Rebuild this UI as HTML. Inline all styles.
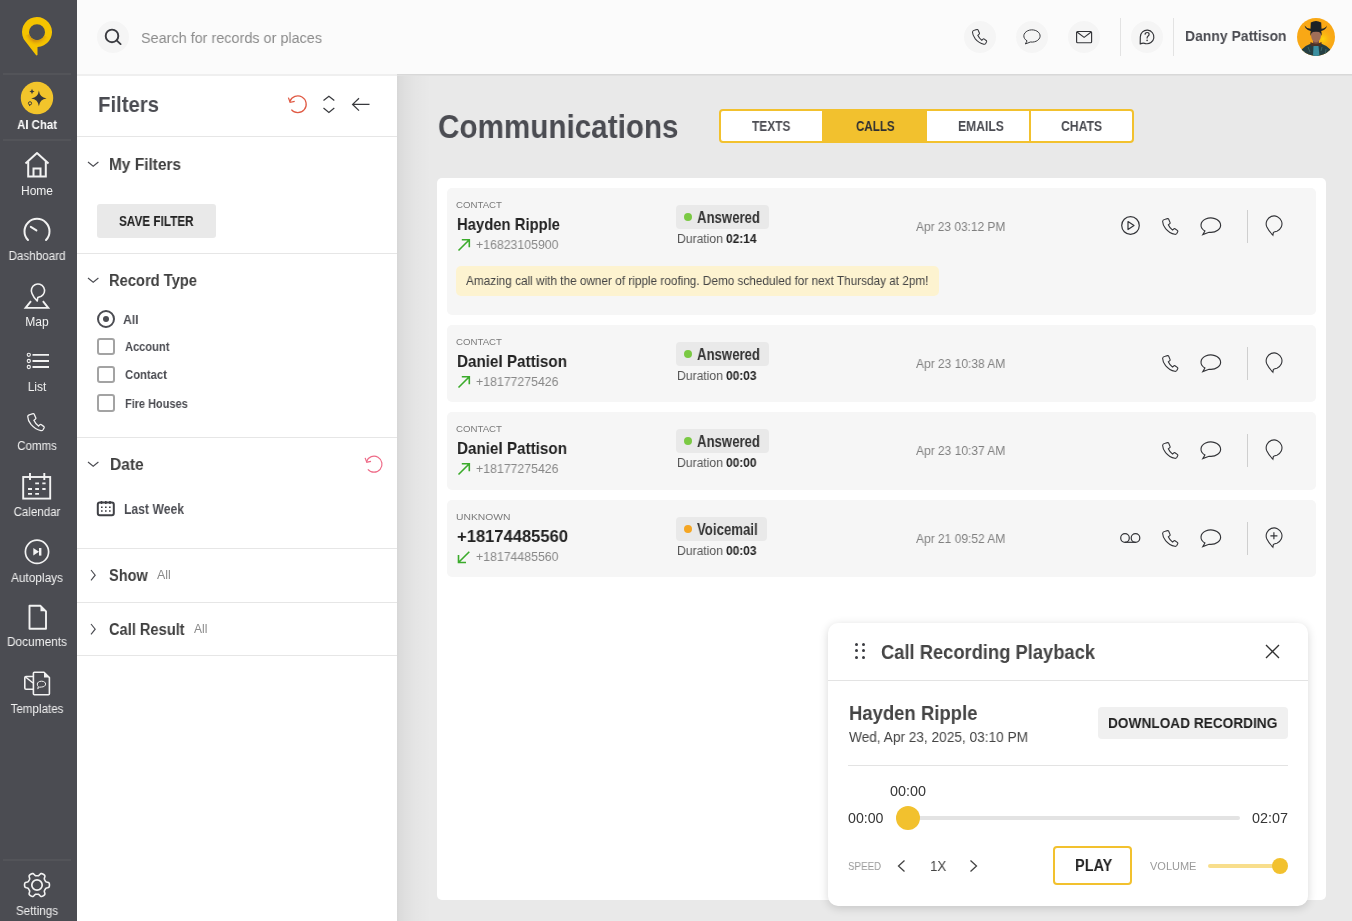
<!DOCTYPE html>
<html><head><meta charset="utf-8"><style>
html,body{margin:0;padding:0;width:1352px;height:921px;overflow:hidden;background:#e9e9e9;font-family:"Liberation Sans", sans-serif;}
svg{display:block}
span{will-change:transform}
</style></head><body>
<div style="position:absolute;left:397px;top:76px;width:955px;height:845px;background:#e9e9e9;"></div>
<div style="position:absolute;left:397px;top:76px;width:34px;height:845px;background:linear-gradient(to right, rgba(0,0,0,0.08) 0px, rgba(0,0,0,0.06) 3px, rgba(0,0,0,0.043) 8px, rgba(0,0,0,0.02) 18px, rgba(0,0,0,0) 34px);"></div>
<div style="position:absolute;left:437px;top:178px;width:889px;height:722px;background:#fff;border-radius:5px;"></div>
<div style="position:absolute;left:77px;top:0px;width:1275px;height:74px;background:#fbfbfb;"></div>
<div style="position:absolute;left:77px;top:74px;width:320px;height:2px;background:#efefef;"></div>
<div style="position:absolute;left:397px;top:74px;width:955px;height:1px;background:#d8d8d8;"></div>
<div style="position:absolute;left:397px;top:75px;width:955px;height:1px;background:#e0e0e0;"></div>
<div style="position:absolute;left:97px;top:21px;width:32px;height:32px;background:#f5f5f5;border-radius:50%;"></div>
<svg style="position:absolute;left:100px;top:24px;overflow:visible" width="26" height="26" viewBox="0 0 26 26"><circle cx="12" cy="11.9" r="6.3" fill="none" stroke="#3b3c41" stroke-width="1.9"/><line x1="16.6" y1="16.4" x2="20.6" y2="20.1" stroke="#3b3c41" stroke-width="1.9" stroke-linecap="round"/></svg>
<div style="position:absolute;left:964px;top:21px;width:32px;height:32px;background:#f5f5f5;border-radius:50%;"></div>
<div style="position:absolute;left:1016px;top:21px;width:32px;height:32px;background:#f5f5f5;border-radius:50%;"></div>
<div style="position:absolute;left:1068px;top:21px;width:32px;height:32px;background:#f5f5f5;border-radius:50%;"></div>
<div style="position:absolute;left:1131px;top:21px;width:32px;height:32px;background:#f5f5f5;border-radius:50%;"></div>
<div style="position:absolute;left:1120px;top:18px;width:1px;height:38px;background:#e3e3e3;"></div>
<div style="position:absolute;left:1173px;top:18px;width:1px;height:38px;background:#e3e3e3;"></div>
<svg style="position:absolute;left:971px;top:28.5px;overflow:visible" width="18" height="18" viewBox="0 0 18 18"><path d="M4.2 1.2 L6.6 0.6 Q7.3 0.5 7.6 1.1 L9.1 4.6 Q9.3 5.2 8.8 5.6 L7.3 6.8 Q8.7 10.0 11.6 12.1 L12.9 10.8 Q13.4 10.4 14.0 10.7 L16.6 12.6 Q17.0 13.0 16.8 13.6 L15.8 15.5 Q15.2 16.5 13.8 16.3 Q8.6 15.3 4.6 10.6 Q1.6 6.7 1.6 3.3 Q1.7 1.7 4.2 1.2 Z" fill="none" stroke="#333438" stroke-width="1.1" transform="scale(0.93)"/></svg>
<svg style="position:absolute;left:1023px;top:28.5px;overflow:visible" width="20" height="17" viewBox="0 0 20 17"><path d="M9 15.28 A9.8 7.2 0 1 0 4.9 13.95 L2.8 17.6 Z" fill="none" stroke="#333438" stroke-width="1.15" transform="scale(0.83,0.85)"/></svg>
<svg style="position:absolute;left:1075px;top:30px;overflow:visible" width="18" height="14" viewBox="0 0 18 14"><rect x="1.6" y="1.5" width="15" height="11.2" rx="1" fill="none" stroke="#333438" stroke-width="1.15"/><path d="M2 2 L9.1 7.4 L16.2 2" fill="none" stroke="#333438" stroke-width="1.15"/></svg>
<svg style="position:absolute;left:1139px;top:29px;overflow:visible" width="16" height="16" viewBox="0 0 16 16"><path d="M1.3 7.9 A6.8 6.8 0 1 1 6.6 14.6 Q4.2 13.6 1.2 14.9 Z" fill="none" stroke="#333438" stroke-width="1.15" stroke-linejoin="round"/><path d="M6 5.6 Q6.1 3.5 8.1 3.5 Q10.1 3.5 10.1 5.3 Q10.1 6.5 8.9 7.2 Q8.1 7.7 8.1 9.1 V9.6" fill="none" stroke="#333438" stroke-width="1.2"/><circle cx="8.1" cy="11.4" r="0.8" fill="#333438"/></svg>
<svg style="position:absolute;left:1297px;top:18px;overflow:visible" width="38" height="38" viewBox="0 0 38 38"><defs><clipPath id="av"><circle cx="19" cy="19" r="19"/></clipPath><radialGradient id="glow" cx="0.68" cy="0.55" r="0.3"><stop offset="0" stop-color="#ffd60a"/><stop offset="1" stop-color="#f8a716" stop-opacity="0"/></radialGradient></defs>
<g clip-path="url(#av)"><rect width="38" height="38" fill="#f9a815"/><rect width="38" height="38" fill="url(#glow)"/>
<path d="M1 38 L4 32 Q8 27.5 14 25.5 L19 27 L24 25.5 Q30 27.5 34 32 L37 38 Z" fill="#253f43"/>
<path d="M7 33 L9 38 M29 31 L28 38 M11 29 L13 34 M25 29 L24 33" stroke="#52807c" stroke-width="1" opacity="0.6"/>
<rect x="16" y="21" width="6" height="5" fill="#7d5240"/><path d="M13.5 24 Q19 27.5 24.5 24 L24.5 27.5 Q19 30 13.5 27.5 Z" fill="#4d3326"/>
<path d="M16.5 28 L21.5 28 L22.5 38 L16 38 Z" fill="#3b8fa0"/>
<path d="M14 13 Q13.6 20.5 16 23 Q19 25.5 22 23 Q24.5 20.5 24 13 Z" fill="#a06e58"/>
<path d="M13.4 18 Q13 12.5 15 11.5 L23 11.5 Q25 12.5 24.6 18 Q23.8 14.5 22 14 Q19 13 16 14 Q14.2 14.5 13.4 18 Z" fill="#262628"/>
<path d="M7.5 7.5 Q8.5 13.5 19 13.5 Q29.5 13.5 30 7.5 Q28.5 10.5 24.5 10.8 L24.2 4.5 Q19 1.5 13.8 4.5 L13.5 10.8 Q9.5 10.5 7.5 7.5 Z" fill="#1d2226"/>
</g></svg>
<div style="position:absolute;left:0px;top:0px;width:77px;height:921px;background:#4b4c52;"></div>
<div style="position:absolute;left:3px;top:73px;width:68px;height:2px;background:#535459;"></div>
<div style="position:absolute;left:3px;top:139px;width:68px;height:2px;background:#535459;"></div>
<div style="position:absolute;left:3px;top:859px;width:68px;height:2px;background:#535459;"></div>
<svg style="position:absolute;left:20px;top:15px;overflow:visible" width="34" height="42" viewBox="0 0 34 42"><defs><radialGradient id="lg" gradientUnits="userSpaceOnUse" cx="17" cy="17.2" r="15"><stop offset="0.5" stop-color="#c8870e"/><stop offset="0.62" stop-color="#d9990c"/><stop offset="0.95" stop-color="#f5c400" stop-opacity="0"/></radialGradient><linearGradient id="lm" x1="0" y1="0" x2="1" y2="0"><stop offset="0" stop-color="#fff" stop-opacity="0.3"/><stop offset="0.4" stop-color="#fff" stop-opacity="1"/><stop offset="1" stop-color="#fff" stop-opacity="0"/></linearGradient><mask id="mk"><rect x="0" y="0" width="34" height="42" fill="url(#lm)"/></mask></defs>
<path d="M17.5 32 A15 15 0 1 0 5.28 26.36 L16.3 40.4 L17.5 40 Z M17 9.2 A8 8 0 1 0 17 25.2 A8 8 0 1 0 17 9.2 Z" fill="#f5c400" fill-rule="evenodd"/>
<path d="M9.27 19.27 A8 8 0 0 0 24.25 20.58 L30.14 23.33 A14.5 14.5 0 0 1 3.0 20.95 Z" fill="url(#lg)" mask="url(#mk)"/></svg>
<svg style="position:absolute;left:21px;top:82px;overflow:visible" width="32" height="32" viewBox="0 0 32 32"><circle cx="16" cy="16" r="16.2" fill="#f2c42b"/>
<path d="M17.9 8.6 Q18.7 15.6 25.6 16.4 Q18.7 17.2 17.9 24.2 Q17.1 17.2 10.2 16.4 Q17.1 15.6 17.9 8.6 Z" fill="#35363b"/>
<path d="M11 6.8 Q11.3 9.3 13.6 9.5 Q11.3 9.8 11 12.2 Q10.7 9.8 8.4 9.5 Q10.7 9.3 11 6.8 Z" fill="#35363b"/>
<circle cx="9" cy="21.3" r="1.6" fill="none" stroke="#35363b" stroke-width="0.9"/><path d="M8 22.7 L8.2 24.2 L9.3 22.9" fill="#35363b"/></svg>
<svg style="position:absolute;left:23px;top:151px;overflow:visible" width="28" height="28" viewBox="0 0 28 28"><path d="M2.5 12.5 L14 2 L25.5 12.5" fill="none" stroke="#f2f2f2" stroke-width="2" stroke-linejoin="round"/><path d="M5.2 10.5 L5.2 25.5 L22.8 25.5 L22.8 10.5" fill="none" stroke="#f2f2f2" stroke-width="2"/><path d="M10.5 25.5 L10.5 17.5 L17.5 17.5 L17.5 25.5" fill="none" stroke="#f2f2f2" stroke-width="2"/></svg>
<svg style="position:absolute;left:23px;top:217px;overflow:visible" width="28" height="26" viewBox="0 0 28 26"><path d="M5 23 A12.5 12.5 0 1 1 23 23" fill="none" stroke="#f2f2f2" stroke-width="2" stroke-linecap="round"/><line x1="7.8" y1="9.8" x2="13.4" y2="13.4" stroke="#f2f2f2" stroke-width="2" stroke-linecap="round"/></svg>
<svg style="position:absolute;left:23px;top:283px;overflow:visible" width="28" height="28" viewBox="0 0 28 28"><path d="M14.2 18 Q10.6 14.6 9.0 10.5 A6.6 6.6 0 1 1 18.3 13.3 L14.8 14.6 Z" fill="none" stroke="#f2f2f2" stroke-width="1.6" stroke-linejoin="round"/><path d="M8 18.2 L2.6 24.9 L25.2 24.9 L19.9 18.2" fill="none" stroke="#f2f2f2" stroke-width="1.9" stroke-linejoin="miter"/></svg>
<svg style="position:absolute;left:25px;top:351px;overflow:visible" width="26" height="20" viewBox="0 0 26 20"><circle cx="3.8" cy="3.8" r="1.6" fill="none" stroke="#f2f2f2" stroke-width="1.1"/><circle cx="3.8" cy="10" r="1.6" fill="none" stroke="#f2f2f2" stroke-width="1.1"/><circle cx="3.8" cy="16" r="1.6" fill="none" stroke="#f2f2f2" stroke-width="1.1"/><path d="M7.5 3.8 H24 M7.5 10 H24 M7.5 16 H24" stroke="#f2f2f2" stroke-width="1.8"/></svg>
<svg style="position:absolute;left:26px;top:412.5px;overflow:visible" width="21" height="21" viewBox="0 0 21 21"><path d="M4.2 1.2 L6.6 0.6 Q7.3 0.5 7.6 1.1 L9.1 4.6 Q9.3 5.2 8.8 5.6 L7.3 6.8 Q8.7 10.0 11.6 12.1 L12.9 10.8 Q13.4 10.4 14.0 10.7 L16.6 12.6 Q17.0 13.0 16.8 13.6 L15.8 15.5 Q15.2 16.5 13.8 16.3 Q8.6 15.3 4.6 10.6 Q1.6 6.7 1.6 3.3 Q1.7 1.7 4.2 1.2 Z" fill="none" stroke="#f2f2f2" stroke-width="1.2" transform="scale(1.08)"/></svg>
<svg style="position:absolute;left:22px;top:472px;overflow:visible" width="30" height="28" viewBox="0 0 30 28"><rect x="1.2" y="5" width="27" height="21.6" fill="none" stroke="#f2f2f2" stroke-width="1.9"/><path d="M8 1 V8 M22.3 1 V8" stroke="#f2f2f2" stroke-width="1.9"/><path d="M13.2 11.4 H17 M20.3 11.4 H23.6 M6 17 H10 M13.2 17 H17 M20.3 17 H23.6 M6 21.8 H10 M13.2 21.8 H17" stroke="#f2f2f2" stroke-width="1.8"/></svg>
<svg style="position:absolute;left:24px;top:539px;overflow:visible" width="26" height="26" viewBox="0 0 26 26"><circle cx="13" cy="12.8" r="11.6" fill="none" stroke="#f2f2f2" stroke-width="1.7"/><path d="M9.3 9 L15 12.8 L9.3 16.6 Z" fill="#f2f2f2"/><rect x="15" y="9" width="2.4" height="7.6" fill="#f2f2f2"/></svg>
<svg style="position:absolute;left:27px;top:604px;overflow:visible" width="22" height="27" viewBox="0 0 22 27"><path d="M2.5 1.8 H13.5 L19 7.3 V24.8 H2.5 Z" fill="none" stroke="#f2f2f2" stroke-width="1.9" stroke-linejoin="round"/><path d="M13.5 1.8 L13.5 7.3 L19 7.3 Z" fill="#f2f2f2"/></svg>
<svg style="position:absolute;left:23px;top:670px;overflow:visible" width="30" height="27" viewBox="0 0 30 27"><path d="M10.5 6.5 H3 Q1.8 6.5 1.8 7.7 V18 Q1.8 19.2 3 19.2 H10.5" fill="none" stroke="#f2f2f2" stroke-width="1.6"/><path d="M2.5 7 L10 13" stroke="#f2f2f2" stroke-width="1.6"/><path d="M11.4 2.2 Q10.4 2.2 10.4 3.2 V23.8 Q10.4 24.8 11.4 24.8 H25.4 Q26.4 24.8 26.4 23.8 V7.5 L21 2.2 Z" fill="none" stroke="#f2f2f2" stroke-width="1.6" stroke-linejoin="round"/><path d="M21 2.2 V7.5 H26.4 Z" fill="#f2f2f2"/><path d="M18.5 11.2 C21.2 11.2 22.6 12.6 22.6 14.1 C22.6 15.7 20.9 17 18.5 17 L16.5 17.2 L14.7 18.7 L15.3 16.6 C14.6 16 14.3 15.1 14.3 14.1 C14.3 12.6 15.8 11.2 18.5 11.2 Z" fill="none" stroke="#f2f2f2" stroke-width="1"/></svg>
<svg style="position:absolute;left:23px;top:871px;overflow:visible" width="28" height="28" viewBox="0 0 28 28"><path d="M26.45 14.00 L26.43 14.54 L26.37 15.08 L26.24 15.61 L25.98 16.11 L25.42 16.53 L24.48 16.81 L23.54 17.01 L22.96 17.26 L22.64 17.58 L22.41 17.92 L22.21 18.27 L22.01 18.62 L21.81 18.97 L21.60 19.32 L21.42 19.69 L21.31 20.13 L21.38 20.76 L21.67 21.67 L21.90 22.62 L21.82 23.32 L21.52 23.80 L21.12 24.17 L20.69 24.49 L20.23 24.78 L19.75 25.04 L19.25 25.26 L18.73 25.41 L18.16 25.43 L17.52 25.15 L16.81 24.48 L16.17 23.77 L15.66 23.39 L15.22 23.27 L14.81 23.25 L14.40 23.25 L14.00 23.25 L13.60 23.25 L13.19 23.25 L12.78 23.27 L12.34 23.39 L11.83 23.77 L11.19 24.48 L10.48 25.15 L9.84 25.43 L9.27 25.41 L8.75 25.26 L8.25 25.04 L7.78 24.78 L7.31 24.49 L6.88 24.17 L6.48 23.80 L6.18 23.32 L6.10 22.62 L6.33 21.67 L6.62 20.76 L6.69 20.13 L6.58 19.69 L6.40 19.32 L6.19 18.97 L5.99 18.63 L5.79 18.27 L5.59 17.92 L5.36 17.58 L5.04 17.26 L4.46 17.01 L3.52 16.81 L2.58 16.53 L2.02 16.11 L1.76 15.61 L1.63 15.08 L1.57 14.54 L1.55 14.00 L1.57 13.46 L1.63 12.92 L1.76 12.39 L2.02 11.89 L2.58 11.47 L3.52 11.19 L4.46 10.99 L5.04 10.74 L5.36 10.42 L5.59 10.08 L5.79 9.73 L5.99 9.38 L6.19 9.03 L6.40 8.68 L6.58 8.31 L6.69 7.87 L6.62 7.24 L6.33 6.33 L6.10 5.38 L6.18 4.68 L6.48 4.20 L6.88 3.83 L7.31 3.51 L7.77 3.22 L8.25 2.96 L8.75 2.74 L9.27 2.59 L9.84 2.57 L10.48 2.85 L11.19 3.52 L11.83 4.23 L12.34 4.61 L12.78 4.73 L13.19 4.75 L13.60 4.75 L14.00 4.75 L14.40 4.75 L14.81 4.75 L15.22 4.73 L15.66 4.61 L16.17 4.23 L16.81 3.52 L17.52 2.85 L18.16 2.57 L18.73 2.59 L19.25 2.74 L19.75 2.96 L20.22 3.22 L20.69 3.51 L21.12 3.83 L21.52 4.20 L21.82 4.68 L21.90 5.38 L21.67 6.33 L21.38 7.24 L21.31 7.87 L21.42 8.31 L21.60 8.68 L21.81 9.03 L22.01 9.38 L22.21 9.73 L22.41 10.08 L22.64 10.42 L22.96 10.74 L23.54 10.99 L24.48 11.19 L25.42 11.47 L25.98 11.89 L26.24 12.39 L26.37 12.92 L26.43 13.46 Z" fill="none" stroke="#f2f2f2" stroke-width="1.6" stroke-linejoin="round"/><circle cx="14" cy="14" r="5.2" fill="none" stroke="#f2f2f2" stroke-width="1.7"/></svg>
<div style="position:absolute;left:77px;top:76px;width:320px;height:845px;background:#fff;"></div>
<svg style="position:absolute;left:286.5px;top:94px;overflow:visible" width="22" height="22" viewBox="0 0 22 22"><path d="M2.9 7.43 A8.4 8.4 0 1 1 4.37 15.7" fill="none" stroke="#e05a44" stroke-width="1.25"/><path d="M1.4 3.6 L3.1 8.3 L7.7 7.3" fill="none" stroke="#e05a44" stroke-width="1.25"/></svg>
<svg style="position:absolute;left:322px;top:94px;overflow:visible" width="14" height="21" viewBox="0 0 14 21"><path d="M1.5 6.6 L6.9 2.3 L12.3 6.6 M1.5 14.1 L6.9 18.4 L12.3 14.1" fill="none" stroke="#38393d" stroke-width="1.25"/></svg>
<svg style="position:absolute;left:351px;top:97px;overflow:visible" width="20" height="15" viewBox="0 0 20 15"><path d="M8 1.2 L1.6 7.4 L8 13.6 M1.6 7.4 H18.5" fill="none" stroke="#38393d" stroke-width="1.25"/></svg>
<div style="position:absolute;left:77px;top:136px;width:320px;height:1px;background:#e6e6e6;"></div>
<div style="position:absolute;left:77px;top:253px;width:320px;height:1px;background:#e6e6e6;"></div>
<div style="position:absolute;left:77px;top:437px;width:320px;height:1px;background:#e6e6e6;"></div>
<div style="position:absolute;left:77px;top:548px;width:320px;height:1px;background:#e6e6e6;"></div>
<div style="position:absolute;left:77px;top:602px;width:320px;height:1px;background:#e6e6e6;"></div>
<div style="position:absolute;left:77px;top:655px;width:320px;height:1px;background:#e6e6e6;"></div>
<svg style="position:absolute;left:87px;top:160.5px;overflow:visible" width="13" height="8" viewBox="0 0 13 8"><path d="M1 1 L6.2 5.2 L11.4 1" fill="none" stroke="#4b4c52" stroke-width="1.15"/></svg>
<div style="position:absolute;left:97px;top:204px;width:119px;height:34px;background:#e9e9e9;border-radius:3px;"></div>
<svg style="position:absolute;left:87px;top:277px;overflow:visible" width="13" height="8" viewBox="0 0 13 8"><path d="M1 1 L6.2 5.2 L11.4 1" fill="none" stroke="#4b4c52" stroke-width="1.15"/></svg>
<div style="position:absolute;left:97px;top:310px;width:14px;height:14px;border:2px solid #4b4c52;border-radius:50%;"></div>
<div style="position:absolute;left:103px;top:316px;width:6px;height:6px;background:#4b4c52;border-radius:50%;"></div>
<div style="position:absolute;left:97.2px;top:338.09999999999997px;width:13.4px;height:13.4px;border:2px solid #a3a3a3;border-radius:3px;"></div>
<div style="position:absolute;left:97.2px;top:366.09999999999997px;width:13.4px;height:13.4px;border:2px solid #a3a3a3;border-radius:3px;"></div>
<div style="position:absolute;left:97.2px;top:394.29999999999995px;width:13.4px;height:13.4px;border:2px solid #a3a3a3;border-radius:3px;"></div>
<svg style="position:absolute;left:87px;top:460.5px;overflow:visible" width="13" height="8" viewBox="0 0 13 8"><path d="M1 1 L6.2 5.2 L11.4 1" fill="none" stroke="#4b4c52" stroke-width="1.15"/></svg>
<svg style="position:absolute;left:364px;top:454px;overflow:visible" width="21" height="21" viewBox="0 0 21 21"><path d="M2.48 7.46 A8 8 0 1 1 3.87 15.34" fill="none" stroke="#ee6a87" stroke-width="1.2"/><path d="M1.1 3.9 L2.8 8.2 L7 7.3" fill="none" stroke="#ee6a87" stroke-width="1.2"/></svg>
<svg style="position:absolute;left:96px;top:500px;overflow:visible" width="20" height="17" viewBox="0 0 20 17"><rect x="1.8" y="2.6" width="16" height="12.6" rx="2" fill="none" stroke="#3f4045" stroke-width="2"/><path d="M5.5 1 V4 M9.8 1 V4 M14 1 V4" stroke="#3f4045" stroke-width="1.6"/><path d="M5 7.3 h1.6 M9 7.3 h1.6 M13 7.3 h1.6 M5 11 h1.6 M9 11 h1.6 M13 11 h1.6" stroke="#3f4045" stroke-width="1.6"/></svg>
<svg style="position:absolute;left:89.8px;top:569px;overflow:visible" width="8" height="14" viewBox="0 0 8 14"><path d="M1 1 L5.2 6.2 L1 11.4" fill="none" stroke="#4b4c52" stroke-width="1.15"/></svg>
<svg style="position:absolute;left:89.8px;top:623px;overflow:visible" width="8" height="14" viewBox="0 0 8 14"><path d="M1 1 L5.2 6.2 L1 11.4" fill="none" stroke="#4b4c52" stroke-width="1.15"/></svg>
<div style="position:absolute;left:719px;top:109px;width:411px;height:30px;border:2px solid #f2c12e;border-radius:4px;background:#fff;"></div>
<div style="position:absolute;left:822px;top:111px;width:105px;height:30px;background:#f2c12e;"></div>
<div style="position:absolute;left:1029px;top:111px;width:2px;height:30px;background:#f2c12e;"></div>
<div style="position:absolute;left:447px;top:188px;width:869px;height:127px;background:#f6f6f6;border-radius:5px;"></div>
<svg style="position:absolute;left:457px;top:238px;overflow:visible" width="15" height="14" viewBox="0 0 15 14"><path d="M1.5 12.5 L12.3 1.7 M4.8 1.7 H12.3 V9.2" fill="none" stroke="#3bab2b" stroke-width="1.6"/></svg>
<div style="position:absolute;left:676px;top:205px;width:93px;height:24px;background:#e9e9e9;border-radius:4px;"></div>
<div style="position:absolute;left:684px;top:213px;width:8px;height:8px;background:#7ac943;border-radius:50%;"></div>
<svg style="position:absolute;left:1120px;top:215.0px;overflow:visible" width="21" height="21" viewBox="0 0 21 21"><circle cx="10.5" cy="10.5" r="8.8" fill="none" stroke="#333438" stroke-width="1.2"/><path d="M8 6.5 L14 10.5 L8 14.5 Z" fill="none" stroke="#333438" stroke-width="1.2" stroke-linejoin="round"/></svg>
<svg style="position:absolute;left:1161px;top:217.7px;overflow:visible" width="19" height="19" viewBox="0 0 19 19"><path d="M4.2 1.2 L6.6 0.6 Q7.3 0.5 7.6 1.1 L9.1 4.6 Q9.3 5.2 8.8 5.6 L7.3 6.8 Q8.7 10.0 11.6 12.1 L12.9 10.8 Q13.4 10.4 14.0 10.7 L16.6 12.6 Q17.0 13.0 16.8 13.6 L15.8 15.5 Q15.2 16.5 13.8 16.3 Q8.6 15.3 4.6 10.6 Q1.6 6.7 1.6 3.3 Q1.7 1.7 4.2 1.2 Z" fill="none" stroke="#333438" stroke-width="1.1"/></svg>
<svg style="position:absolute;left:1199.5px;top:217.0px;overflow:visible" width="23" height="19" viewBox="0 0 23 19"><path d="M9 15.28 A9.8 7.2 0 1 0 4.9 13.95 L2.8 17.6 Z" fill="none" stroke="#333438" stroke-width="1.15"/></svg>
<div style="position:absolute;left:1247px;top:210px;width:1px;height:33px;background:#cfcfcf;"></div>
<svg style="position:absolute;left:1264.5px;top:214.5px;overflow:visible" width="18" height="21" viewBox="0 0 18 21"><path d="M7.9 20.2 Q3.6 15.6 1.6 11.4 A7.9 7.9 0 1 1 11.9 16.2 Q9.6 16.6 8.4 17.4 Z" fill="none" stroke="#333438" stroke-width="1.1"/></svg>
<div style="position:absolute;left:456px;top:266px;width:483px;height:30px;background:#fdf3d0;border-radius:5px;"></div>
<div style="position:absolute;left:447px;top:325px;width:869px;height:77px;background:#f6f6f6;border-radius:5px;"></div>
<svg style="position:absolute;left:457px;top:375px;overflow:visible" width="15" height="14" viewBox="0 0 15 14"><path d="M1.5 12.5 L12.3 1.7 M4.8 1.7 H12.3 V9.2" fill="none" stroke="#3bab2b" stroke-width="1.6"/></svg>
<div style="position:absolute;left:676px;top:342px;width:93px;height:24px;background:#e9e9e9;border-radius:4px;"></div>
<div style="position:absolute;left:684px;top:350px;width:8px;height:8px;background:#7ac943;border-radius:50%;"></div>
<svg style="position:absolute;left:1161px;top:354.7px;overflow:visible" width="19" height="19" viewBox="0 0 19 19"><path d="M4.2 1.2 L6.6 0.6 Q7.3 0.5 7.6 1.1 L9.1 4.6 Q9.3 5.2 8.8 5.6 L7.3 6.8 Q8.7 10.0 11.6 12.1 L12.9 10.8 Q13.4 10.4 14.0 10.7 L16.6 12.6 Q17.0 13.0 16.8 13.6 L15.8 15.5 Q15.2 16.5 13.8 16.3 Q8.6 15.3 4.6 10.6 Q1.6 6.7 1.6 3.3 Q1.7 1.7 4.2 1.2 Z" fill="none" stroke="#333438" stroke-width="1.1"/></svg>
<svg style="position:absolute;left:1199.5px;top:354.0px;overflow:visible" width="23" height="19" viewBox="0 0 23 19"><path d="M9 15.28 A9.8 7.2 0 1 0 4.9 13.95 L2.8 17.6 Z" fill="none" stroke="#333438" stroke-width="1.15"/></svg>
<div style="position:absolute;left:1247px;top:347px;width:1px;height:33px;background:#cfcfcf;"></div>
<svg style="position:absolute;left:1264.5px;top:351.5px;overflow:visible" width="18" height="21" viewBox="0 0 18 21"><path d="M7.9 20.2 Q3.6 15.6 1.6 11.4 A7.9 7.9 0 1 1 11.9 16.2 Q9.6 16.6 8.4 17.4 Z" fill="none" stroke="#333438" stroke-width="1.1"/></svg>
<div style="position:absolute;left:447px;top:412px;width:869px;height:78px;background:#f6f6f6;border-radius:5px;"></div>
<svg style="position:absolute;left:457px;top:462px;overflow:visible" width="15" height="14" viewBox="0 0 15 14"><path d="M1.5 12.5 L12.3 1.7 M4.8 1.7 H12.3 V9.2" fill="none" stroke="#3bab2b" stroke-width="1.6"/></svg>
<div style="position:absolute;left:676px;top:429px;width:93px;height:24px;background:#e9e9e9;border-radius:4px;"></div>
<div style="position:absolute;left:684px;top:437px;width:8px;height:8px;background:#7ac943;border-radius:50%;"></div>
<svg style="position:absolute;left:1161px;top:441.7px;overflow:visible" width="19" height="19" viewBox="0 0 19 19"><path d="M4.2 1.2 L6.6 0.6 Q7.3 0.5 7.6 1.1 L9.1 4.6 Q9.3 5.2 8.8 5.6 L7.3 6.8 Q8.7 10.0 11.6 12.1 L12.9 10.8 Q13.4 10.4 14.0 10.7 L16.6 12.6 Q17.0 13.0 16.8 13.6 L15.8 15.5 Q15.2 16.5 13.8 16.3 Q8.6 15.3 4.6 10.6 Q1.6 6.7 1.6 3.3 Q1.7 1.7 4.2 1.2 Z" fill="none" stroke="#333438" stroke-width="1.1"/></svg>
<svg style="position:absolute;left:1199.5px;top:441.0px;overflow:visible" width="23" height="19" viewBox="0 0 23 19"><path d="M9 15.28 A9.8 7.2 0 1 0 4.9 13.95 L2.8 17.6 Z" fill="none" stroke="#333438" stroke-width="1.15"/></svg>
<div style="position:absolute;left:1247px;top:434px;width:1px;height:33px;background:#cfcfcf;"></div>
<svg style="position:absolute;left:1264.5px;top:438.5px;overflow:visible" width="18" height="21" viewBox="0 0 18 21"><path d="M7.9 20.2 Q3.6 15.6 1.6 11.4 A7.9 7.9 0 1 1 11.9 16.2 Q9.6 16.6 8.4 17.4 Z" fill="none" stroke="#333438" stroke-width="1.1"/></svg>
<div style="position:absolute;left:447px;top:500px;width:869px;height:77px;background:#f6f6f6;border-radius:5px;"></div>
<svg style="position:absolute;left:457px;top:550px;overflow:visible" width="15" height="14" viewBox="0 0 15 14"><path d="M12.3 1.7 L1.5 12.5 M1.5 5 V12.5 H9" fill="none" stroke="#3bab2b" stroke-width="1.6"/></svg>
<div style="position:absolute;left:676px;top:517px;width:91px;height:24px;background:#e9e9e9;border-radius:4px;"></div>
<div style="position:absolute;left:684px;top:525px;width:8px;height:8px;background:#f5a623;border-radius:50%;"></div>
<svg style="position:absolute;left:1119px;top:531.5px;overflow:visible" width="23" height="12" viewBox="0 0 23 12"><circle cx="6" cy="6" r="4.3" fill="none" stroke="#333438" stroke-width="1.2"/><circle cx="16.5" cy="6" r="4.3" fill="none" stroke="#333438" stroke-width="1.2"/><line x1="6" y1="10.3" x2="16.5" y2="10.3" stroke="#333438" stroke-width="1.2"/></svg>
<svg style="position:absolute;left:1161px;top:529.7px;overflow:visible" width="19" height="19" viewBox="0 0 19 19"><path d="M4.2 1.2 L6.6 0.6 Q7.3 0.5 7.6 1.1 L9.1 4.6 Q9.3 5.2 8.8 5.6 L7.3 6.8 Q8.7 10.0 11.6 12.1 L12.9 10.8 Q13.4 10.4 14.0 10.7 L16.6 12.6 Q17.0 13.0 16.8 13.6 L15.8 15.5 Q15.2 16.5 13.8 16.3 Q8.6 15.3 4.6 10.6 Q1.6 6.7 1.6 3.3 Q1.7 1.7 4.2 1.2 Z" fill="none" stroke="#333438" stroke-width="1.1"/></svg>
<svg style="position:absolute;left:1199.5px;top:529.0px;overflow:visible" width="23" height="19" viewBox="0 0 23 19"><path d="M9 15.28 A9.8 7.2 0 1 0 4.9 13.95 L2.8 17.6 Z" fill="none" stroke="#333438" stroke-width="1.15"/></svg>
<div style="position:absolute;left:1247px;top:522px;width:1px;height:33px;background:#cfcfcf;"></div>
<svg style="position:absolute;left:1264.5px;top:526.5px;overflow:visible" width="18" height="21" viewBox="0 0 18 21"><path d="M7.9 20.2 Q3.6 15.6 1.6 11.4 A7.9 7.9 0 1 1 11.9 16.2 Q9.6 16.6 8.4 17.4 Z" fill="none" stroke="#333438" stroke-width="1.1"/><path d="M8.9 5.3 V12.3 M5.4 8.8 H12.4" stroke="#333438" stroke-width="1.15"/></svg>
<div style="position:absolute;left:828px;top:623px;width:480px;height:283px;background:#fff;border-radius:10px;box-shadow:0 2px 10px rgba(0,0,0,0.16);"></div>
<div style="position:absolute;left:855.0px;top:642.5px;width:3.0px;height:3.0px;background:#3a3b40;border-radius:50%;"></div>
<div style="position:absolute;left:855.0px;top:648.9px;width:3.0px;height:3.0px;background:#3a3b40;border-radius:50%;"></div>
<div style="position:absolute;left:855.0px;top:655.5px;width:3.0px;height:3.0px;background:#3a3b40;border-radius:50%;"></div>
<div style="position:absolute;left:862.0px;top:642.5px;width:3.0px;height:3.0px;background:#3a3b40;border-radius:50%;"></div>
<div style="position:absolute;left:862.0px;top:648.9px;width:3.0px;height:3.0px;background:#3a3b40;border-radius:50%;"></div>
<div style="position:absolute;left:862.0px;top:655.5px;width:3.0px;height:3.0px;background:#3a3b40;border-radius:50%;"></div>
<svg style="position:absolute;left:1264.5px;top:643.5px;overflow:visible" width="15" height="15" viewBox="0 0 15 15"><path d="M1 1 L14 14 M14 1 L1 14" stroke="#333" stroke-width="1.35"/></svg>
<div style="position:absolute;left:828px;top:680px;width:480px;height:1px;background:#e3e3e3;"></div>
<div style="position:absolute;left:1098px;top:707px;width:190px;height:32px;background:#f0f0f0;border-radius:4px;"></div>
<div style="position:absolute;left:848px;top:765px;width:440px;height:1px;background:#e3e3e3;"></div>
<div style="position:absolute;left:896px;top:816px;width:344px;height:4px;background:#e3e3e3;border-radius:2px;"></div>
<div style="position:absolute;left:896px;top:806px;width:24px;height:24px;background:#f2c12e;border-radius:50%;"></div>
<svg style="position:absolute;left:896px;top:859px;overflow:visible" width="11" height="14" viewBox="0 0 11 14"><path d="M8.5 1.5 L2.5 7 L8.5 12.5" fill="none" stroke="#444" stroke-width="1.3"/></svg>
<svg style="position:absolute;left:968px;top:859px;overflow:visible" width="11" height="14" viewBox="0 0 11 14"><path d="M2.5 1.5 L8.5 7 L2.5 12.5" fill="none" stroke="#444" stroke-width="1.3"/></svg>
<div style="position:absolute;left:1053px;top:846px;width:75px;height:35px;border:2px solid #f2c12e;border-radius:4px;"></div>
<div style="position:absolute;left:1208px;top:864px;width:78px;height:4px;background:#f8de8c;border-radius:2px;"></div>
<div style="position:absolute;left:1272px;top:858px;width:16px;height:16px;background:#f2c12e;border-radius:50%;"></div>
<span id="t0" style="position:absolute;top:29.58px;font-size:15.5px;line-height:15.5px;font-weight:400;color:#8b8b8b;white-space:nowrap;transform:scaleX(0.9296);left:141.00px;transform-origin:0 0;">Search for records or places</span>
<span id="t1" style="position:absolute;top:28.48px;font-size:15.5px;line-height:15.5px;font-weight:700;color:#4b4c52;white-space:nowrap;transform:scaleX(0.8996);left:1184.50px;transform-origin:0 0;">Danny Pattison</span>
<span id="t2" style="position:absolute;top:118.92px;font-size:12.5px;line-height:12.5px;font-weight:700;color:#ffffff;white-space:nowrap;transform:scaleX(0.9143);left:-63px;width:200px;text-align:center;transform-origin:100px 0;">AI Chat</span>
<span id="t3" style="position:absolute;top:184.84px;font-size:12px;line-height:12px;font-weight:400;color:#f2f2f2;white-space:nowrap;transform:scaleX(0.9995);left:-63px;width:200px;text-align:center;transform-origin:100px 0;">Home</span>
<span id="t4" style="position:absolute;top:250.34px;font-size:12px;line-height:12px;font-weight:400;color:#f2f2f2;white-space:nowrap;transform:scaleX(0.9707);left:-63px;width:200px;text-align:center;transform-origin:100px 0;">Dashboard</span>
<span id="t5" style="position:absolute;top:315.64px;font-size:12px;line-height:12px;font-weight:400;color:#f2f2f2;white-space:nowrap;transform:scaleX(1.0067);left:-63px;width:200px;text-align:center;transform-origin:100px 0;">Map</span>
<span id="t6" style="position:absolute;top:380.54px;font-size:12px;line-height:12px;font-weight:400;color:#f2f2f2;white-space:nowrap;transform:scaleX(0.9900);left:-63px;width:200px;text-align:center;transform-origin:100px 0;">List</span>
<span id="t7" style="position:absolute;top:439.84px;font-size:12px;line-height:12px;font-weight:400;color:#f2f2f2;white-space:nowrap;transform:scaleX(0.9554);left:-63px;width:200px;text-align:center;transform-origin:100px 0;">Comms</span>
<span id="t8" style="position:absolute;top:506.44px;font-size:12px;line-height:12px;font-weight:400;color:#f2f2f2;white-space:nowrap;transform:scaleX(0.9650);left:-63px;width:200px;text-align:center;transform-origin:100px 0;">Calendar</span>
<span id="t9" style="position:absolute;top:571.94px;font-size:12px;line-height:12px;font-weight:400;color:#f2f2f2;white-space:nowrap;transform:scaleX(0.9867);left:-63px;width:200px;text-align:center;transform-origin:100px 0;">Autoplays</span>
<span id="t10" style="position:absolute;top:636.24px;font-size:12px;line-height:12px;font-weight:400;color:#f2f2f2;white-space:nowrap;transform:scaleX(0.9884);left:-63px;width:200px;text-align:center;transform-origin:100px 0;">Documents</span>
<span id="t11" style="position:absolute;top:702.74px;font-size:12px;line-height:12px;font-weight:400;color:#f2f2f2;white-space:nowrap;transform:scaleX(0.9689);left:-63px;width:200px;text-align:center;transform-origin:100px 0;">Templates</span>
<span id="t12" style="position:absolute;top:904.84px;font-size:12px;line-height:12px;font-weight:400;color:#f2f2f2;white-space:nowrap;transform:scaleX(0.9686);left:-63px;width:200px;text-align:center;transform-origin:100px 0;">Settings</span>
<span id="t13" style="position:absolute;top:94.07px;font-size:22px;line-height:22px;font-weight:700;color:#4b4c52;white-space:nowrap;transform:scaleX(0.9238);left:98.00px;transform-origin:0 0;">Filters</span>
<span id="t14" style="position:absolute;top:156.95px;font-size:16px;line-height:16px;font-weight:700;color:#3f3f3f;white-space:nowrap;transform:scaleX(0.9640);left:109.00px;transform-origin:0 0;">My Filters</span>
<span id="t15" style="position:absolute;top:214.15px;font-size:14px;line-height:14px;font-weight:700;color:#222;white-space:nowrap;transform:scaleX(0.8388);left:119.00px;transform-origin:0 0;">SAVE FILTER</span>
<span id="t16" style="position:absolute;top:273.15px;font-size:16px;line-height:16px;font-weight:700;color:#3f3f3f;white-space:nowrap;transform:scaleX(0.9192);left:109.00px;transform-origin:0 0;">Record Type</span>
<span id="t17" style="position:absolute;top:312.99px;font-size:13px;line-height:13px;font-weight:700;color:#4b4c52;white-space:nowrap;transform:scaleX(0.9383);left:123.00px;transform-origin:0 0;">All</span>
<span id="t18" style="position:absolute;top:340.49px;font-size:13px;line-height:13px;font-weight:700;color:#4b4c52;white-space:nowrap;transform:scaleX(0.8538);left:125.30px;transform-origin:0 0;">Account</span>
<span id="t19" style="position:absolute;top:368.49px;font-size:13px;line-height:13px;font-weight:700;color:#4b4c52;white-space:nowrap;transform:scaleX(0.8679);left:125.30px;transform-origin:0 0;">Contact</span>
<span id="t20" style="position:absolute;top:396.69px;font-size:13px;line-height:13px;font-weight:700;color:#4b4c52;white-space:nowrap;transform:scaleX(0.8425);left:125.30px;transform-origin:0 0;">Fire Houses</span>
<span id="t21" style="position:absolute;top:457.05px;font-size:16px;line-height:16px;font-weight:700;color:#3f3f3f;white-space:nowrap;transform:scaleX(0.9715);left:109.70px;transform-origin:0 0;">Date</span>
<span id="t22" style="position:absolute;top:502.35px;font-size:14px;line-height:14px;font-weight:700;color:#4b4c52;white-space:nowrap;transform:scaleX(0.8696);left:123.70px;transform-origin:0 0;">Last Week</span>
<span id="t23" style="position:absolute;top:568.45px;font-size:16px;line-height:16px;font-weight:700;color:#3f3f3f;white-space:nowrap;transform:scaleX(0.9093);left:109.00px;transform-origin:0 0;">Show</span>
<span id="t24" style="position:absolute;top:569.14px;font-size:12px;line-height:12px;font-weight:400;color:#8a8a8a;white-space:nowrap;transform:scaleX(1.0342);left:157.00px;transform-origin:0 0;">All</span>
<span id="t25" style="position:absolute;top:622.45px;font-size:16px;line-height:16px;font-weight:700;color:#3f3f3f;white-space:nowrap;transform:scaleX(0.9143);left:109.00px;transform-origin:0 0;">Call Result</span>
<span id="t26" style="position:absolute;top:623.14px;font-size:12px;line-height:12px;font-weight:400;color:#8a8a8a;white-space:nowrap;transform:scaleX(0.9967);left:193.70px;transform-origin:0 0;">All</span>
<span id="t27" style="position:absolute;top:110.04px;font-size:33.5px;line-height:33.5px;font-weight:700;color:#4b4c52;white-space:nowrap;transform:scaleX(0.8850);left:437.50px;transform-origin:0 0;">Communications</span>
<span id="t28" style="position:absolute;top:119.35px;font-size:14px;line-height:14px;font-weight:700;color:#4b4c52;white-space:nowrap;transform:scaleX(0.8510);left:752.30px;transform-origin:0 0;">TEXTS</span>
<span id="t29" style="position:absolute;top:119.35px;font-size:14px;line-height:14px;font-weight:700;color:#2e2f33;white-space:nowrap;transform:scaleX(0.8292);left:855.50px;transform-origin:0 0;">CALLS</span>
<span id="t30" style="position:absolute;top:119.35px;font-size:14px;line-height:14px;font-weight:700;color:#4b4c52;white-space:nowrap;transform:scaleX(0.8678);left:958.00px;transform-origin:0 0;">EMAILS</span>
<span id="t31" style="position:absolute;top:119.35px;font-size:14px;line-height:14px;font-weight:700;color:#4b4c52;white-space:nowrap;transform:scaleX(0.8731);left:1060.80px;transform-origin:0 0;">CHATS</span>
<span id="t32" style="position:absolute;top:199.87px;font-size:9.6px;line-height:9.6px;font-weight:400;color:#7a7a7a;white-space:nowrap;transform:scaleX(1.0075);left:456.30px;transform-origin:0 0;">CONTACT</span>
<span id="t33" style="position:absolute;top:215.61px;font-size:17px;line-height:17px;font-weight:700;color:#222;white-space:nowrap;transform:scaleX(0.8722);left:456.60px;transform-origin:0 0;">Hayden Ripple</span>
<span id="t34" style="position:absolute;top:238.62px;font-size:12.5px;line-height:12.5px;font-weight:400;color:#888;white-space:nowrap;transform:scaleX(0.9847);left:475.50px;transform-origin:0 0;">+16823105900</span>
<span id="t35" style="position:absolute;top:209.62px;font-size:15.8px;line-height:15.8px;font-weight:700;color:#333;white-space:nowrap;transform:scaleX(0.8344);left:697.30px;transform-origin:0 0;">Answered</span>
<span id="t36" style="position:absolute;top:233.22px;font-size:12.5px;line-height:12.5px;font-weight:400;color:#555;white-space:nowrap;transform:scaleX(0.9735);left:676.70px;transform-origin:0 0;">Duration</span>
<span id="t37" style="position:absolute;top:233.22px;font-size:12.5px;line-height:12.5px;font-weight:700;color:#222;white-space:nowrap;transform:scaleX(0.9536);left:725.80px;transform-origin:0 0;">02:14</span>
<span id="t38" style="position:absolute;top:219.99px;font-size:13px;line-height:13px;font-weight:400;color:#808080;white-space:nowrap;transform:scaleX(0.9153);left:916.30px;transform-origin:0 0;">Apr 23 03:12 PM</span>
<span id="t39" style="position:absolute;top:274.19px;font-size:13px;line-height:13px;font-weight:400;color:#444;white-space:nowrap;transform:scaleX(0.9057);left:466.00px;transform-origin:0 0;">Amazing call with the owner of ripple roofing. Demo scheduled for next Thursday at 2pm!</span>
<span id="t40" style="position:absolute;top:336.87px;font-size:9.6px;line-height:9.6px;font-weight:400;color:#7a7a7a;white-space:nowrap;transform:scaleX(1.0075);left:456.30px;transform-origin:0 0;">CONTACT</span>
<span id="t41" style="position:absolute;top:352.61px;font-size:17px;line-height:17px;font-weight:700;color:#222;white-space:nowrap;transform:scaleX(0.8957);left:456.60px;transform-origin:0 0;">Daniel Pattison</span>
<span id="t42" style="position:absolute;top:375.62px;font-size:12.5px;line-height:12.5px;font-weight:400;color:#888;white-space:nowrap;transform:scaleX(0.9847);left:475.50px;transform-origin:0 0;">+18177275426</span>
<span id="t43" style="position:absolute;top:346.62px;font-size:15.8px;line-height:15.8px;font-weight:700;color:#333;white-space:nowrap;transform:scaleX(0.8344);left:697.30px;transform-origin:0 0;">Answered</span>
<span id="t44" style="position:absolute;top:370.22px;font-size:12.5px;line-height:12.5px;font-weight:400;color:#555;white-space:nowrap;transform:scaleX(0.9735);left:676.70px;transform-origin:0 0;">Duration</span>
<span id="t45" style="position:absolute;top:370.22px;font-size:12.5px;line-height:12.5px;font-weight:700;color:#222;white-space:nowrap;transform:scaleX(0.9536);left:725.80px;transform-origin:0 0;">00:03</span>
<span id="t46" style="position:absolute;top:356.99px;font-size:13px;line-height:13px;font-weight:400;color:#808080;white-space:nowrap;transform:scaleX(0.9221);left:916.30px;transform-origin:0 0;">Apr 23 10:38 AM</span>
<span id="t47" style="position:absolute;top:423.87px;font-size:9.6px;line-height:9.6px;font-weight:400;color:#7a7a7a;white-space:nowrap;transform:scaleX(1.0075);left:456.30px;transform-origin:0 0;">CONTACT</span>
<span id="t48" style="position:absolute;top:439.61px;font-size:17px;line-height:17px;font-weight:700;color:#222;white-space:nowrap;transform:scaleX(0.8957);left:456.60px;transform-origin:0 0;">Daniel Pattison</span>
<span id="t49" style="position:absolute;top:462.62px;font-size:12.5px;line-height:12.5px;font-weight:400;color:#888;white-space:nowrap;transform:scaleX(0.9847);left:475.50px;transform-origin:0 0;">+18177275426</span>
<span id="t50" style="position:absolute;top:433.62px;font-size:15.8px;line-height:15.8px;font-weight:700;color:#333;white-space:nowrap;transform:scaleX(0.8344);left:697.30px;transform-origin:0 0;">Answered</span>
<span id="t51" style="position:absolute;top:457.22px;font-size:12.5px;line-height:12.5px;font-weight:400;color:#555;white-space:nowrap;transform:scaleX(0.9735);left:676.70px;transform-origin:0 0;">Duration</span>
<span id="t52" style="position:absolute;top:457.22px;font-size:12.5px;line-height:12.5px;font-weight:700;color:#222;white-space:nowrap;transform:scaleX(0.9536);left:725.80px;transform-origin:0 0;">00:00</span>
<span id="t53" style="position:absolute;top:443.99px;font-size:13px;line-height:13px;font-weight:400;color:#808080;white-space:nowrap;transform:scaleX(0.9221);left:916.30px;transform-origin:0 0;">Apr 23 10:37 AM</span>
<span id="t54" style="position:absolute;top:511.87px;font-size:9.6px;line-height:9.6px;font-weight:400;color:#7a7a7a;white-space:nowrap;transform:scaleX(1.0762);left:456.30px;transform-origin:0 0;">UNKNOWN</span>
<span id="t55" style="position:absolute;top:527.61px;font-size:17px;line-height:17px;font-weight:700;color:#222;white-space:nowrap;transform:scaleX(0.9742);left:456.60px;transform-origin:0 0;">+18174485560</span>
<span id="t56" style="position:absolute;top:550.62px;font-size:12.5px;line-height:12.5px;font-weight:400;color:#888;white-space:nowrap;transform:scaleX(0.9847);left:475.50px;transform-origin:0 0;">+18174485560</span>
<span id="t57" style="position:absolute;top:521.62px;font-size:15.8px;line-height:15.8px;font-weight:700;color:#333;white-space:nowrap;transform:scaleX(0.8362);left:697.30px;transform-origin:0 0;">Voicemail</span>
<span id="t58" style="position:absolute;top:545.22px;font-size:12.5px;line-height:12.5px;font-weight:400;color:#555;white-space:nowrap;transform:scaleX(0.9735);left:676.70px;transform-origin:0 0;">Duration</span>
<span id="t59" style="position:absolute;top:545.22px;font-size:12.5px;line-height:12.5px;font-weight:700;color:#222;white-space:nowrap;transform:scaleX(0.9536);left:725.80px;transform-origin:0 0;">00:03</span>
<span id="t60" style="position:absolute;top:531.99px;font-size:13px;line-height:13px;font-weight:400;color:#808080;white-space:nowrap;transform:scaleX(0.9221);left:916.30px;transform-origin:0 0;">Apr 21 09:52 AM</span>
<span id="t61" style="position:absolute;top:643.09px;font-size:19.5px;line-height:19.5px;font-weight:700;color:#444;white-space:nowrap;transform:scaleX(0.9403);left:880.70px;transform-origin:0 0;">Call Recording Playback</span>
<span id="t62" style="position:absolute;top:703.84px;font-size:19.8px;line-height:19.8px;font-weight:700;color:#444;white-space:nowrap;transform:scaleX(0.9345);left:849.00px;transform-origin:0 0;">Hayden Ripple</span>
<span id="t63" style="position:absolute;top:729.95px;font-size:14px;line-height:14px;font-weight:400;color:#444;white-space:nowrap;transform:scaleX(0.9759);left:849.00px;transform-origin:0 0;">Wed, Apr 23, 2025, 03:10 PM</span>
<span id="t64" style="position:absolute;top:715.40px;font-size:15px;line-height:15px;font-weight:700;color:#222;white-space:nowrap;transform:scaleX(0.9111);left:1108.20px;transform-origin:0 0;">DOWNLOAD RECORDING</span>
<span id="t65" style="position:absolute;top:783.95px;font-size:14px;line-height:14px;font-weight:400;color:#363636;white-space:nowrap;transform:scaleX(1.0272);left:890.00px;transform-origin:0 0;">00:00</span>
<span id="t66" style="position:absolute;top:810.95px;font-size:14px;line-height:14px;font-weight:400;color:#363636;white-space:nowrap;transform:scaleX(1.0129);left:848.30px;transform-origin:0 0;">00:00</span>
<span id="t67" style="position:absolute;top:811.15px;font-size:14px;line-height:14px;font-weight:400;color:#363636;white-space:nowrap;transform:scaleX(1.0272);left:1251.70px;transform-origin:0 0;">02:07</span>
<span id="t68" style="position:absolute;top:860.69px;font-size:11px;line-height:11px;font-weight:400;color:#9a9a9a;white-space:nowrap;transform:scaleX(0.8902);left:848.00px;transform-origin:0 0;">SPEED</span>
<span id="t69" style="position:absolute;top:858.00px;font-size:15px;line-height:15px;font-weight:400;color:#444;white-space:nowrap;transform:scaleX(0.8933);left:929.60px;transform-origin:0 0;">1X</span>
<span id="t70" style="position:absolute;top:858.35px;font-size:16px;line-height:16px;font-weight:700;color:#222;white-space:nowrap;transform:scaleX(0.9053);left:1075.00px;transform-origin:0 0;">PLAY</span>
<span id="t71" style="position:absolute;top:860.59px;font-size:11px;line-height:11px;font-weight:400;color:#9a9a9a;white-space:nowrap;transform:scaleX(0.9899);left:1149.80px;transform-origin:0 0;">VOLUME</span>
</body></html>
